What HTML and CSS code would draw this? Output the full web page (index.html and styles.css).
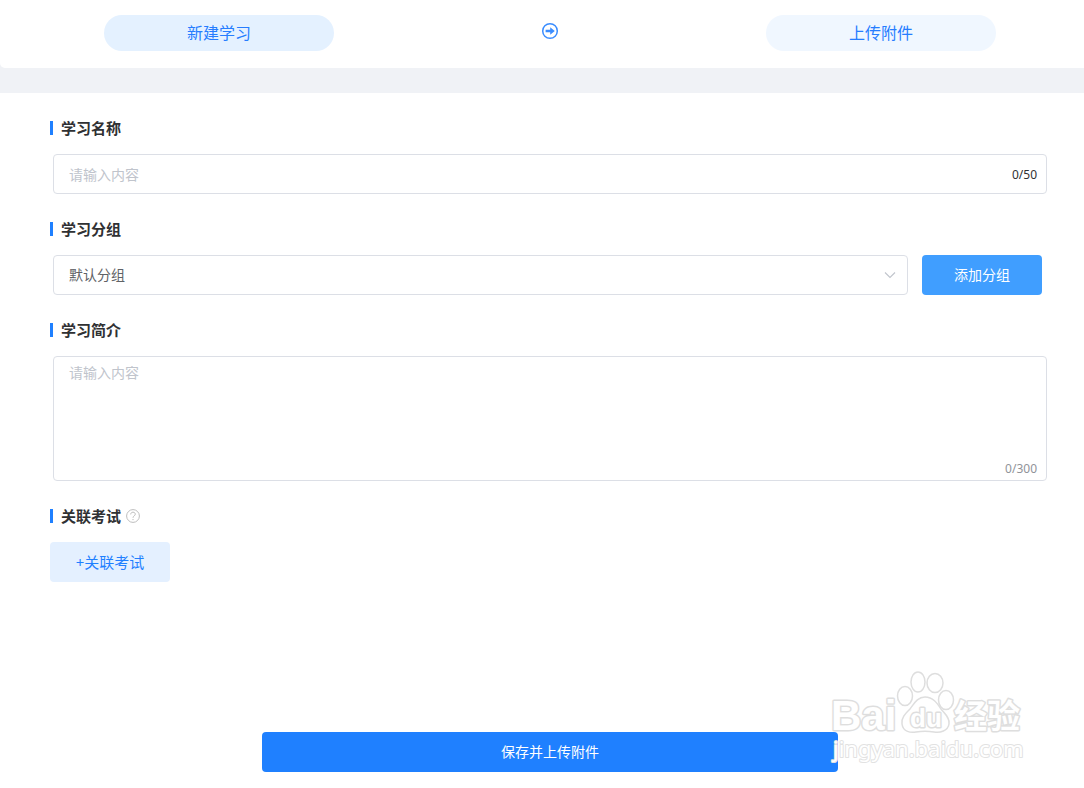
FILE: index.html
```html
<!DOCTYPE html>
<html lang="zh-CN">
<head>
<meta charset="utf-8">
<title>新建学习</title>
<link rel="stylesheet" href="styles.css">
</head>
<body>
<nav class="steps">
  <a class="step step-active" href="#new">新建学习</a>
  <svg class="step-arrow" viewBox="0 0 18 18" aria-hidden="true">
    <circle cx="9" cy="9" r="7.3" fill="none" stroke="#3b8dff" stroke-width="1.5"/>
    <path d="M4.6 7.7h4.6V5.2L13.8 9l-4.600 3.800v-2.500H4.600z" fill="#3b8dff"/>
  </svg>
  <a class="step" href="#upload">上传附件</a>
</nav>
<main class="page">
  <form class="form">
    <section class="section">
      <label class="title" for="name">学习名称</label>
      <div class="field">
        <input class="control" id="name" type="text" maxlength="50" placeholder="请输入内容">
        <span class="count">0/50</span>
      </div>
    </section>
    <section class="section">
      <label class="title" for="group">学习分组</label>
      <div class="group-row">
        <div class="field select-field">
          <select class="control" id="group"><option>默认分组</option></select>
          <svg class="chevron" viewBox="0 0 14 14" aria-hidden="true"><path d="M2 4.5l5 5 5-5" fill="none" stroke="#c0c4cc" stroke-width="1.1"/></svg>
        </div>
        <button class="button add-button" type="button">添加分组</button>
      </div>
    </section>
    <section class="section">
      <label class="title" for="intro">学习简介</label>
      <div class="field">
        <textarea class="control area" id="intro" maxlength="300" placeholder="请输入内容"></textarea>
        <span class="count area-count">0/300</span>
      </div>
    </section>
    <section class="section">
      <h2 class="title">关联考试
        <svg class="help" viewBox="0 0 14 14" aria-hidden="true">
          <circle cx="7" cy="7" r="6.4" fill="none" stroke="#bdbdbd"/>
          <path d="M4.7 5.4C4.7 4 5.700 3.200 7 3.200s2.300.8 2.300 2C9.300 6.800 7 6.800 7 8.800" fill="none" stroke="#bdbdbd"/>
          <circle cx="7" cy="10.600" r=".7" fill="#bdbdbd"/>
        </svg>
      </h2>
      <button class="button link-button" type="button">+关联考试</button>
    </section>
    <button class="button save-button" type="submit">保存并上传附件</button>
  </form>
  <svg class="watermark" viewBox="0 0 200 100" role="img" aria-label="Baidu 经验">
    <g class="outline">
      <text class="mark-latin" x="1" y="60" font-size="42">Bai</text>
      <ellipse cx="75" cy="26" rx="7.5" ry="9.5"/>
      <ellipse cx="88" cy="12" rx="7" ry="10"/>
      <ellipse cx="105" cy="13" rx="8" ry="9.5"/>
      <ellipse cx="116" cy="30" rx="7.5" ry="9.5"/>
      <path d="M95 27c-8 0-11 7-15 12-5 5-9 9-8 15 1 8 9 9 14 8 6-1 12-1 18 0 6 1 14-1 15-8 1-6-4-10-8-15-4-6-8-12-16-12z"/>
      <text class="mark-latin" x="80" y="57" font-size="26">du</text>
      <text class="mark-cjk" x="124" y="58" font-size="33">经验</text>
    </g>
    <text class="mark-url" x="3" y="87" font-size="22">jingyan.baidu.com</text>
  </svg>
</main>
</body>
</html>
```
FILE: styles.css
```css
* {
  box-sizing: border-box;
}

body {
  margin: 0;
  background: #f0f2f6;
  color: #303133;
  font: 14px/20px "Noto Sans", "Noto Sans CJK SC", sans-serif;
}

.steps {
  display: flex;
  align-items: flex-start;
  justify-content: space-between;
  padding: 15px 88px 17px 104px;
  background: #fff;
  border-bottom-left-radius: 5px;
}

.step {
  width: 230px;
  border-radius: 18px;
  background: #f0f7ff;
  color: #267dff;
  font-size: 16px;
  line-height: 36px;
  text-align: center;
  text-decoration: none;
}

.step-active {
  background: #e4f1ff;
}

.step-arrow {
  width: 18px;
  height: 18px;
  margin-top: 7px;
}

.page {
  position: relative;
  min-height: calc(100vh - 93px);
  margin-top: 25px;
  padding: 25px 34px 16px 50px;
  background: #fff;
}

.form {
  display: flex;
  flex-direction: column;
  gap: 25px;
}

.title {
  display: flex;
  align-items: center;
  margin: 0 0 16px;
  color: #303133;
  font-size: 15px;
  font-weight: 700;
  line-height: 20px;
}

.title::before {
  content: "";
  width: 3px;
  height: 14px;
  margin-right: 8px;
  background: #1f80ff;
}

.help {
  width: 14px;
  height: 14px;
  margin-left: 5px;
}

.field {
  position: relative;
  margin: 0 3px;
}

.control {
  display: block;
  width: 100%;
  height: 40px;
  padding: 0 15px;
  border: 1px solid #dcdfe6;
  border-radius: 4px;
  background: #fff;
  color: #606266;
  font: inherit;
  appearance: none;
  outline: none;
}

.control::placeholder {
  color: #c0c4cc;
}

.area {
  height: 125px;
  padding-top: 6px;
  resize: none;
}

.count {
  position: absolute;
  top: 11px;
  right: 10px;
  font-size: 12px;
}

.area-count {
  top: auto;
  bottom: 2px;
  color: #909399;
}

.group-row {
  display: flex;
  gap: 14px;
  padding: 0 5px 0 3px;
  margin-right: 3px;
}

.select-field {
  flex: 1;
  margin: 0;
}

.chevron {
  position: absolute;
  top: 13px;
  right: 11px;
  width: 14px;
  height: 14px;
  pointer-events: none;
}

.button {
  height: 40px;
  padding: 0;
  border: 0;
  border-radius: 4px;
  color: #fff;
  font: inherit;
}

.add-button {
  width: 120px;
  background: #409eff;
}

.link-button {
  width: 120px;
  background: #e4f0ff;
  color: #1f80ff;
  font-size: 15px;
}

.save-button {
  align-self: center;
  width: 57.6%;
  margin-top: 125px;
  background: #1f80ff;
}

.watermark {
  position: absolute;
  right: 54px;
  bottom: 18px;
  width: 200px;
  height: 100px;
  pointer-events: none;
}

.outline {
  fill: #fff;
  stroke: #dedede;
  stroke-width: 1.5px;
}

.outline text {
  stroke-width: 3px;
  stroke-linejoin: round;
  paint-order: stroke;
}

.mark-latin {
  font-family: "Liberation Sans", sans-serif;
  font-weight: 700;
}

.mark-cjk {
  font-family: "Noto Sans CJK SC", sans-serif;
  font-weight: 700;
}

.mark-url {
  fill: #fff;
  stroke: #e2e2e2;
  stroke-width: 2px;
  stroke-linejoin: round;
  paint-order: stroke;
  font-family: "Noto Sans", sans-serif;
}
```
